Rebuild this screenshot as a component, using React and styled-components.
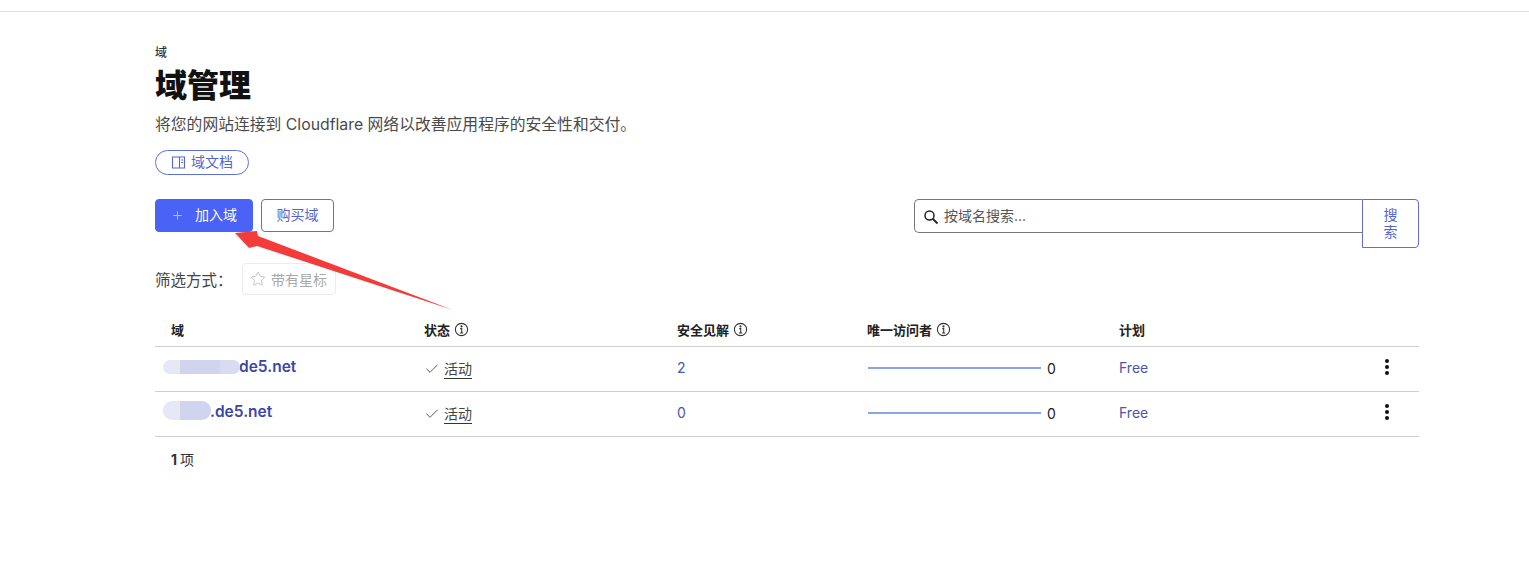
import React from "react";
import styled, { createGlobalStyle } from "styled-components";
import { Plus, Star, Check } from "lucide-react";

const Global = createGlobalStyle`
  html, body { margin: 0; padding: 0; background: #fff; }
  body { font-family: Inter, "Noto Sans CJK SC", sans-serif; color: #36393a; }
`;

const Page = styled.div`
  position: relative;
  height: 588px;
  overflow: hidden;
`;
const TopBar = styled.div`
  height: 11px;
  border-bottom: 1px solid #e4e4e4;
`;
const Main = styled.main`
  width: 1264px;
  margin-left: 155px;
  padding-top: 33px;
  display: flex;
  flex-direction: column;
`;
const Crumb = styled.div`
  font-size: 12px;
  line-height: 16px;
  font-weight: 500;
  color: #333;
`;
const Title = styled.h1`
  margin: 3px 0 0;
  font-size: 32px;
  line-height: 44px;
  font-weight: 900;
  color: #111;
`;
const Subtitle = styled.p`
  margin: 6px 0 0;
  font-size: 15.8px;
  line-height: 22px;
  color: #4a4a4a;
`;
const DocPill = styled.a`
  margin-top: 14px;
  align-self: flex-start;
  box-sizing: border-box;
  width: 94px;
  height: 25px;
  padding-bottom: 3px;
  display: flex;
  align-items: center;
  justify-content: center;
  gap: 5px;
  border: 1px solid #5d6fd6;
  border-radius: 13px;
  color: #5366d0;
  font-size: 14px;
  svg { margin-top: 3px; }
`;
const Toolbar = styled.div`
  margin-top: 24px;
  height: 49px;
  display: flex;
  justify-content: space-between;
  align-items: flex-start;
`;
const Actions = styled.div`
  display: flex;
  gap: 8px;
`;
const Button = styled.button`
  box-sizing: border-box;
  height: 33px;
  font-family: inherit;
  font-size: 14px;
  border-radius: 4px;
  display: flex;
  align-items: center;
  justify-content: center;
  cursor: pointer;
  padding: 0 0 3px;
  width: ${p => p.$w}px;
  gap: ${p => p.$gap || 0}px;
  background: ${p => (p.$primary ? "#4a62f5" : "#fff")};
  color: ${p => (p.$primary ? "#fff" : "#5366d0")};
  border: 1px solid ${p => (p.$primary ? "#4a62f5" : "#5d6fd6")};
  svg { margin-top: 3px; }
`;
const SearchGroup = styled.div`
  display: flex;
  align-items: flex-start;
  width: 505px;
`;
const SearchBox = styled.div`
  box-sizing: border-box;
  width: 449px;
  height: 34px;
  display: flex;
  align-items: center;
  gap: 5px;
  padding: 0 0 2px 8px;
  border: 1px solid #777;
  border-right: 0;
  border-radius: 5px 0 0 5px;
  font-size: 14px;
  color: #555;
  svg { margin-top: 3px; }
`;
const SearchButton = styled.button`
  box-sizing: border-box;
  width: 57px;
  height: 49px;
  padding: 0 20px 2px;
  background: #fff;
  border: 1px solid #5d6fd6;
  border-radius: 0 4px 4px 0;
  color: #5366d0;
  font-family: inherit;
  font-size: 14px;
  line-height: 17px;
`;
const FilterRow = styled.div`
  margin-top: 15px;
  display: flex;
  align-items: center;
  gap: 9px;
`;
const FilterLabel = styled.span`
  font-size: 15.5px;
  color: #444;
`;
const FilterChip = styled.div`
  box-sizing: border-box;
  width: 94px;
  height: 32px;
  border: 1px solid #ececec;
  border-radius: 4px;
  display: flex;
  align-items: center;
  justify-content: center;
  gap: 5px;
  font-size: 14px;
  color: #a9a9a9;
`;
const Table = styled.div`
  margin-top: 25px;
  display: flex;
  flex-direction: column;
`;
const Row = styled.div`
  display: grid;
  grid-template-columns: 253px 253px 190px 252px 1fr 40px;
  align-items: center;
  height: ${p => (p.$head ? 26 : 44)}px;
  border-bottom: 1px solid #cfcfcf;
`;
const HeadCell = styled.div`
  padding-left: 16px;
  padding-bottom: 7px;
  display: flex;
  align-items: center;
  gap: 4px;
  font-size: 13px;
  font-weight: 700;
  color: #222;
`;
const Cell = styled.div`
  padding-left: 16px;
  margin-top: -4px;
  display: flex;
  align-items: center;
  font-size: 14px;
  color: ${p => (p.$link ? "#4a57ad" : "#222")};
`;
const DomainCell = styled.div`
  position: relative;
  padding-left: ${p => p.$pad}px;
  margin-top: -5px;
  font-size: 15.5px;
  line-height: 20px;
  font-weight: 600;
  color: #3b47a8;
`;
const Redact = styled.span`
  position: absolute;
  left: ${p => p.$left}px;
  top: ${p => p.$top}px;
  height: ${p => p.$h}px;
  width: ${p => p.$w}px;
  border-radius: ${p => p.$radius};
  background: ${p => p.$bg};
`;
const StatusWrap = styled.div`
  padding-left: 16px;
  display: flex;
  align-items: center;
  gap: 4px;
`;
const StatusText = styled.span`
  font-size: 14px;
  color: #444;
  line-height: 18px;
  border-bottom: 1px solid #333;
`;
const Spark = styled.div`
  width: 173px;
  height: 2px;
  margin-left: 1px;
  background: #8aa4ea;
`;
const VisitCell = styled(Cell)`
  margin-top: -2px;
  gap: 6px;
`;
const Kebab = styled.div`
  display: flex;
  flex-direction: column;
  gap: 2px;
  align-items: center;
  margin-top: -4px;
  width: 16px;
`;
const Dot = styled.span`
  width: 4px;
  height: 4px;
  border-radius: 50%;
  background: #111;
`;
const Footer = styled.div`
  margin-top: 14px;
  padding-left: 16px;
  font-size: 14px;
  line-height: 18px;
  color: #333;
  strong { font-weight: 700; margin-right: 3px; }
`;
const ArrowOverlay = styled.svg`
  position: absolute;
  left: 230px;
  top: 225px;
  pointer-events: none;
`;

const Info = () => (
  <svg width="15" height="15" viewBox="0 0 14 14" fill="none" stroke="#333" strokeWidth="1">
    <circle cx="7" cy="7" r="5.7" />
    <path d="M5.8 6.2H7.2V10M5.6 10.2H8.6" />
    <circle cx="7" cy="4.1" r="0.5" fill="#333" />
  </svg>
);

const BookIcon = () => (
  <svg width="15" height="15" viewBox="0 0 15 15" fill="none" stroke="#5366d0" strokeWidth="1.1">
    <path d="M1.5 2H8.5V13H1.5ZM8.5 2H13.5V13H8.5" />
    <path d="M10.2 5H12.2M10.2 7.5H12.2" />
  </svg>
);

const SearchIcon = () => (
  <svg width="16" height="16" viewBox="0 0 16 16" fill="none" stroke="#222" strokeWidth="1.5">
    <circle cx="6.5" cy="6.5" r="4.5" />
    <path d="M10 10L14.5 14.5" strokeWidth="1.8" />
  </svg>
);

const rows = [
  {
    id: "a", name: "de5.net", pad: 84, insights: "2",
    blobs: [
      { left: 8, w: 20, top: 3, h: 14, radius: "7px 0 0 7px", bg: "#e6e8f5" },
      { left: 25, w: 40, top: 3, h: 14, radius: "0", bg: "#d0d4ee" },
      { left: 65, w: 20, top: 3, h: 14, radius: "0 7px 7px 0", bg: "#d8dbf1" },
    ],
  },
  {
    id: "b", name: ".de5.net", pad: 55, insights: "0",
    blobs: [
      { left: 8, w: 18, top: -1, h: 19, radius: "9px 0 0 9px", bg: "#e6e8f5" },
      { left: 25, w: 31, top: -1, h: 19, radius: "0 9px 9px 0", bg: "#d0d4ee" },
    ],
  },
];

export default function App() {
  return (
    <Page>
      <Global />
      <TopBar />
      <Main>
        <Crumb>域</Crumb>
        <Title>域管理</Title>
        <Subtitle>将您的网站连接到 Cloudflare 网络以改善应用程序的安全性和交付。</Subtitle>
        <DocPill><BookIcon />域文档</DocPill>
        <Toolbar>
          <Actions>
            <Button $primary $w={98} $gap={11}><Plus size={13} strokeWidth={1.5} color="#c9d0fb" />加入域</Button>
            <Button $w={73}>购买域</Button>
          </Actions>
          <SearchGroup>
            <SearchBox><SearchIcon />按域名搜索...</SearchBox>
            <SearchButton>搜索</SearchButton>
          </SearchGroup>
        </Toolbar>
        <FilterRow>
          <FilterLabel>筛选方式：</FilterLabel>
          <FilterChip><Star size={16} strokeWidth={1.2} color="#b5b5b5" />带有星标</FilterChip>
        </FilterRow>
        <Table>
          <Row $head>
            <HeadCell>域</HeadCell>
            <HeadCell>状态<Info /></HeadCell>
            <HeadCell>安全见解<Info /></HeadCell>
            <HeadCell>唯一访问者<Info /></HeadCell>
            <HeadCell>计划</HeadCell>
            <div />
          </Row>
          {rows.map(r => (
            <Row key={r.id}>
              <DomainCell $pad={r.pad}>
                {r.name}
                {r.blobs.map(b => (
                  <Redact key={b.left} $left={b.left} $top={b.top} $w={b.w} $h={b.h} $radius={b.radius} $bg={b.bg} />
                ))}
              </DomainCell>
              <StatusWrap>
                <Check size={16} strokeWidth={1.2} color="#333" />
                <StatusText>活动</StatusText>
              </StatusWrap>
              <Cell $link>{r.insights}</Cell>
              <VisitCell><Spark /><span>0</span></VisitCell>
              <Cell $link>Free</Cell>
              <Kebab><Dot /><Dot /><Dot /></Kebab>
            </Row>
          ))}
        </Table>
        <Footer><strong>1</strong>项</Footer>
      </Main>
      <ArrowOverlay width="240" height="95" viewBox="0 0 240 95">
        <path d="M5 8 L27 6 L28 11 L223 85 L27 21 L19 23 Z" fill="#f23c3c" />
      </ArrowOverlay>
    </Page>
  );
}
